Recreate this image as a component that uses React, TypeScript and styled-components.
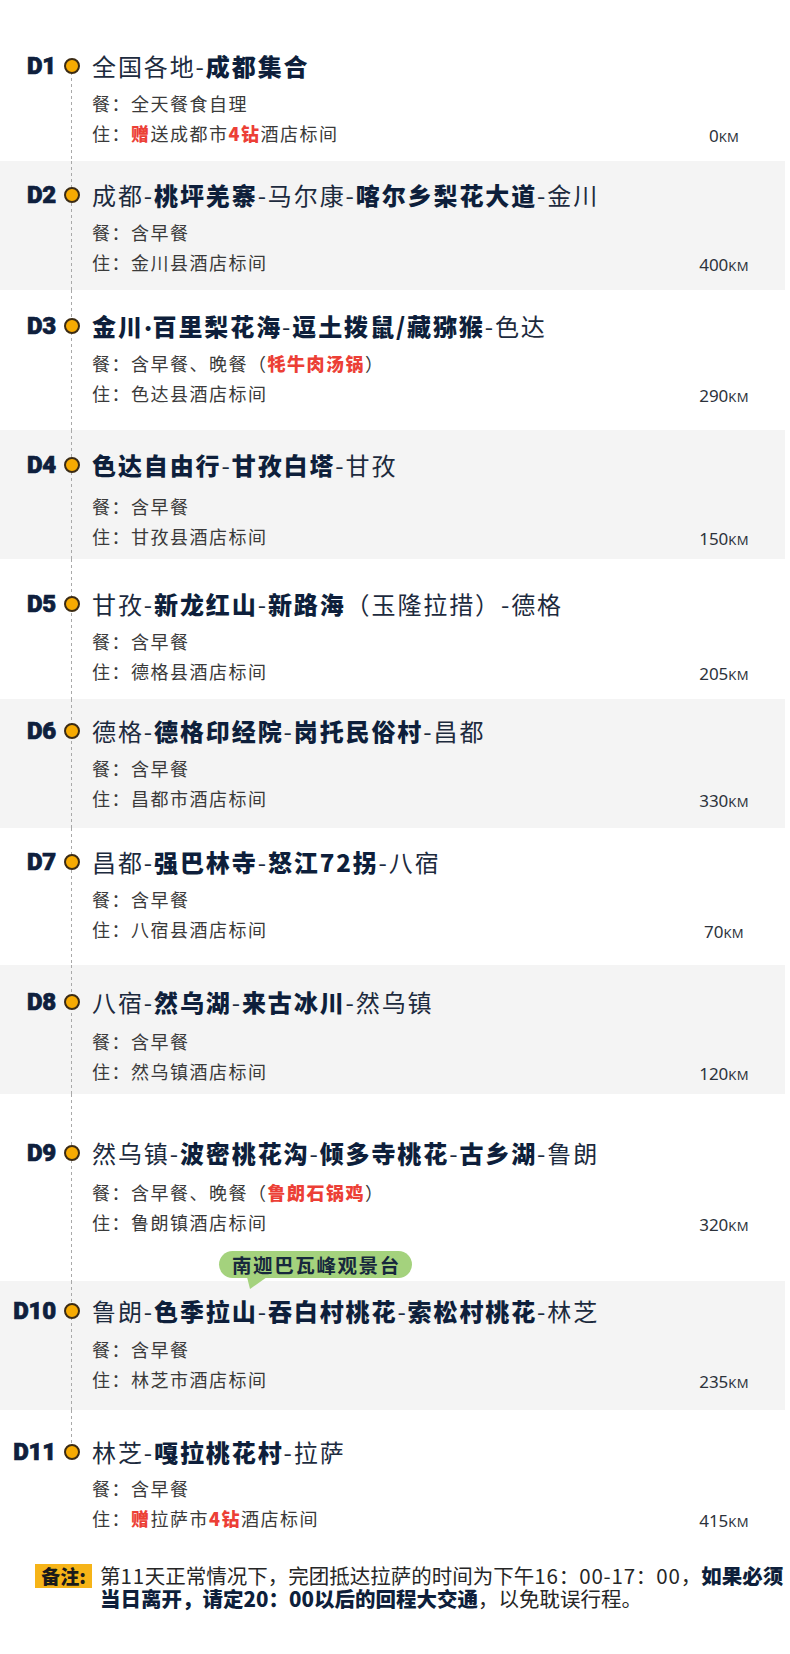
import React from "react";
import styled, { createGlobalStyle } from "styled-components";

const GlobalStyle = createGlobalStyle`
  html, body { margin: 0; padding: 0; background: #ffffff; }
  body { font-family: "Noto Sans CJK SC", "Noto Sans", sans-serif; }
`;

type Seg = { t: string; b?: boolean; r?: boolean; dot?: boolean };

type DayData = {
  d: string;
  title: Seg[];
  meal: Seg[];
  stay: Seg[];
  km: string;
  pt: number;
  gap: number;
  pb: number;
  bubble?: string;
};

const days: DayData[] = [
  {
    d: "D1",
    title: [{ t: "全国各地-" }, { t: "成都集合", b: true }],
    meal: [{ t: "全天餐食自理" }],
    stay: [{ t: "赠", r: true }, { t: "送成都市" }, { t: "4钻", r: true }, { t: "酒店标间" }],
    km: "0",
    pt: 48,
    gap: 4,
    pb: 13,
  },
  {
    d: "D2",
    title: [
      { t: "成都-" },
      { t: "桃坪羌寨", b: true },
      { t: "-马尔康-" },
      { t: "喀尔乡梨花大道", b: true },
      { t: "-金川" },
    ],
    meal: [{ t: "含早餐" }],
    stay: [{ t: "金川县酒店标间" }],
    km: "400",
    pt: 16,
    gap: 4,
    pb: 13,
  },
  {
    d: "D3",
    title: [
      { t: "金川", b: true },
      { t: "·", b: true, dot: true },
      { t: "百里梨花海", b: true },
      { t: "-" },
      { t: "逗土拨鼠/藏猕猴", b: true },
      { t: "-色达" },
    ],
    meal: [{ t: "含早餐、晚餐（" }, { t: "牦牛肉汤锅", r: true }, { t: "）" }],
    stay: [{ t: "色达县酒店标间" }],
    km: "290",
    pt: 18,
    gap: 4,
    pb: 22,
  },
  {
    d: "D4",
    title: [
      { t: "色达自由行", b: true },
      { t: "-" },
      { t: "甘孜白塔", b: true },
      { t: "-甘孜" },
    ],
    meal: [{ t: "含早餐" }],
    stay: [{ t: "甘孜县酒店标间" }],
    km: "150",
    pt: 17,
    gap: 8,
    pb: 8,
  },
  {
    d: "D5",
    title: [
      { t: "甘孜-" },
      { t: "新龙红山", b: true },
      { t: "-" },
      { t: "新路海", b: true },
      { t: "（玉隆拉措）-德格" },
    ],
    meal: [{ t: "含早餐" }],
    stay: [{ t: "德格县酒店标间" }],
    km: "205",
    pt: 27,
    gap: 4,
    pb: 13,
  },
  {
    d: "D6",
    title: [
      { t: "德格-" },
      { t: "德格印经院", b: true },
      { t: "-" },
      { t: "岗托民俗村", b: true },
      { t: "-昌都" },
    ],
    meal: [{ t: "含早餐" }],
    stay: [{ t: "昌都市酒店标间" }],
    km: "330",
    pt: 14,
    gap: 4,
    pb: 15,
  },
  {
    d: "D7",
    title: [
      { t: "昌都-" },
      { t: "强巴林寺", b: true },
      { t: "-" },
      { t: "怒江72拐", b: true },
      { t: "-八宿" },
    ],
    meal: [{ t: "含早餐" }],
    stay: [{ t: "八宿县酒店标间" }],
    km: "70",
    pt: 16,
    gap: 4,
    pb: 21,
  },
  {
    d: "D8",
    title: [
      { t: "八宿-" },
      { t: "然乌湖", b: true },
      { t: "-" },
      { t: "来古冰川", b: true },
      { t: "-然乌镇" },
    ],
    meal: [{ t: "含早餐" }],
    stay: [{ t: "然乌镇酒店标间" }],
    km: "120",
    pt: 19,
    gap: 6,
    pb: 8,
  },
  {
    d: "D9",
    title: [
      { t: "然乌镇-" },
      { t: "波密桃花沟", b: true },
      { t: "-" },
      { t: "倾多寺桃花", b: true },
      { t: "-" },
      { t: "古乡湖", b: true },
      { t: "-鲁朗" },
    ],
    meal: [{ t: "含早餐、晚餐（" }, { t: "鲁朗石锅鸡", r: true }, { t: "）" }],
    stay: [{ t: "鲁朗镇酒店标间" }],
    km: "320",
    pt: 41,
    gap: 6,
    pb: 3,
    bubble: "南迦巴瓦峰观景台",
  },
  {
    d: "D10",
    title: [
      { t: "鲁朗-" },
      { t: "色季拉山", b: true },
      { t: "-" },
      { t: "吞白村桃花", b: true },
      { t: "-" },
      { t: "索松村桃花", b: true },
      { t: "-林芝" },
    ],
    meal: [{ t: "含早餐" }],
    stay: [{ t: "林芝市酒店标间" }],
    km: "235",
    pt: 12,
    gap: 5,
    pb: 16,
  },
  {
    d: "D11",
    title: [{ t: "林芝-" }, { t: "嘎拉桃花村", b: true }, { t: "-拉萨" }],
    meal: [{ t: "含早餐" }],
    stay: [{ t: "赠", r: true }, { t: "拉萨市" }, { t: "4钻", r: true }, { t: "酒店标间" }],
    km: "415",
    pt: 24,
    gap: 3,
    pb: 31,
  },
];

const Page = styled.main`
  width: 790px;
  background: #ffffff;
  padding-bottom: 44px;
`;

const Day = styled.section<{ $alt: boolean; $pt: number; $pb: number; $pos: "first" | "mid" | "last" }>`
  width: 785px;
  display: grid;
  grid-template-columns: 62px 20px 1fr 60px 31px;
  grid-auto-rows: auto;
  align-items: center;
  padding: ${(p) => p.$pt}px 0 ${(p) => p.$pb}px;
  box-sizing: border-box;
  background-color: ${(p) => (p.$alt ? "#f4f4f4" : "#ffffff")};
  background-image: repeating-linear-gradient(to bottom, #a9a9a9 0 3px, transparent 3px 6px);
  background-repeat: no-repeat;
  background-size: ${(p) =>
    p.$pos === "first"
      ? `1px calc(100% - ${p.$pt + 18}px)`
      : p.$pos === "last"
      ? `1px ${p.$pt + 18}px`
      : "1px 100%"};
  background-position: ${(p) => (p.$pos === "first" ? "71px 100%" : "71px 0")};
`;

const DayLabel = styled.div`
  grid-column: 1;
  grid-row: 1;
  height: 36px;
  text-align: right;
  padding-right: 6px;
  font-family: "Roboto", "Noto Sans", sans-serif;
  font-weight: 900;
  font-size: 24px;
  line-height: 36px;
  color: #0f203d;
  letter-spacing: -0.2px;
  -webkit-text-stroke: 0.7px #0f203d;
`;

const Dot = styled.span`
  grid-column: 2;
  grid-row: 1;
  justify-self: center;
  width: 16px;
  height: 16px;
  box-sizing: border-box;
  border-radius: 50%;
  background: #f7ab02;
  border: 2.5px solid #3b2b14;
`;

const Title = styled.div`
  grid-column: 3 / span 2;
  grid-row: 1;
  height: 36px;
  padding-left: 10px;
  font-family: "Noto Sans CJK SC", sans-serif;
  font-size: 24px;
  line-height: 36px;
  letter-spacing: 1.9px;
  color: #1d2b3e;
  white-space: nowrap;
`;

const Strong = styled.span`
  font-weight: 900;
  color: #0e1f3b;
`;

const NarrowDot = styled.span`
  font-family: "Lato", "Noto Sans", sans-serif;
  font-weight: 900;
  letter-spacing: 0;
  margin: 0 1px;
  color: #0e1f3b;
`;

const Red = styled.span`
  font-weight: 900;
  color: #ec3f36;
`;

const SubLine = styled.div<{ $row: number; $mt?: number }>`
  grid-column: 3;
  grid-row: ${(p) => p.$row};
  height: 30px;
  margin-top: ${(p) => p.$mt ?? 0}px;
  padding-left: 10px;
  font-family: "Noto Sans CJK SC", sans-serif;
  font-size: 18px;
  line-height: 30px;
  letter-spacing: 1.5px;
  color: #3a3a3a;
  white-space: nowrap;
`;

const Km = styled.div`
  grid-column: 4;
  grid-row: 3;
  align-self: start;
  height: 22px;
  margin-top: 7px;
  text-align: center;
  font-family: "Noto Sans", sans-serif;
  font-size: 17px;
  line-height: 22px;
  color: #2c323b;
  white-space: nowrap;
`;

const Unit = styled.span`
  font-size: 13px;
  line-height: 1;
  letter-spacing: 0.3px;
`;

const Bubble = styled.div`
  grid-column: 3 / span 2;
  grid-row: 4;
  justify-self: start;
  position: relative;
  z-index: 2;
  margin: 14px 0 0 137px;
  height: 27px;
  padding: 0 11px 0 13px;
  border-radius: 14px;
  background: #a4d27d;
  font-family: "Noto Sans CJK SC", sans-serif;
  font-weight: 700;
  font-size: 19.5px;
  line-height: 27px;
  letter-spacing: 1.6px;
  color: #17283c;
  white-space: nowrap;

  &::after {
    content: "";
    position: absolute;
    left: 28px;
    top: 26px;
    width: 20px;
    height: 12px;
    background: #a4d27d;
    clip-path: polygon(0 0, 100% 0, 15% 100%);
  }
`;

const Note = styled.div`
  display: flex;
  align-items: flex-start;
  gap: 8px;
  padding-left: 35px;
`;

const NoteTag = styled.span`
  flex: none;
  width: 57px;
  height: 24px;
  box-sizing: border-box;
  background: #f6b418;
  font-family: "Noto Sans CJK SC", sans-serif;
  font-weight: 900;
  font-size: 19px;
  line-height: 24px;
  text-align: center;
  color: #1a1a1a;
`;

const NoteText = styled.div`
  font-family: "Noto Sans CJK SC", sans-serif;
  font-size: 20.5px;
  line-height: 23px;
  color: #262626;
`;

const NoteLine = styled.div`
  height: 23px;
  white-space: nowrap;
`;

const Digits = styled.span`
  letter-spacing: 0.8px;
`;

const renderSegs = (segs: Seg[]) =>
  segs.map((s, i) =>
    s.dot ? (
      <NarrowDot key={i}>{s.t}</NarrowDot>
    ) : s.r ? (
      <Red key={i}>{s.t}</Red>
    ) : s.b ? (
      <Strong key={i}>{s.t}</Strong>
    ) : (
      <React.Fragment key={i}>{s.t}</React.Fragment>
    )
  );

export default function App() {
  return (
    <>
      <GlobalStyle />
      <Page>
        {days.map((day, i) => (
          <Day
            key={day.d}
            $alt={i % 2 === 1}
            $pt={day.pt}
            $pb={day.pb}
            $pos={i === 0 ? "first" : i === days.length - 1 ? "last" : "mid"}
          >
            <DayLabel>{day.d}</DayLabel>
            <Dot />
            <Title>{renderSegs(day.title)}</Title>
            <SubLine $row={2} $mt={day.gap}>
              餐：{renderSegs(day.meal)}
            </SubLine>
            <SubLine $row={3}>住：{renderSegs(day.stay)}</SubLine>
            <Km>
              {day.km}
              <Unit>KM</Unit>
            </Km>
            {day.bubble && <Bubble>{day.bubble}</Bubble>}
          </Day>
        ))}
        <Note>
          <NoteTag>备注:</NoteTag>
          <NoteText>
            <NoteLine>
              第<Digits>11</Digits>天正常情况下，完团抵达拉萨的时间为下午<Digits>16</Digits>：<Digits>00-17</Digits>：<Digits>00</Digits>，<Strong>如果必须</Strong>
            </NoteLine>
            <NoteLine>
              <Strong>当日离开，请定20：00以后的回程大交通</Strong>，以免耽误行程。
            </NoteLine>
          </NoteText>
        </Note>
      </Page>
    </>
  );
}
